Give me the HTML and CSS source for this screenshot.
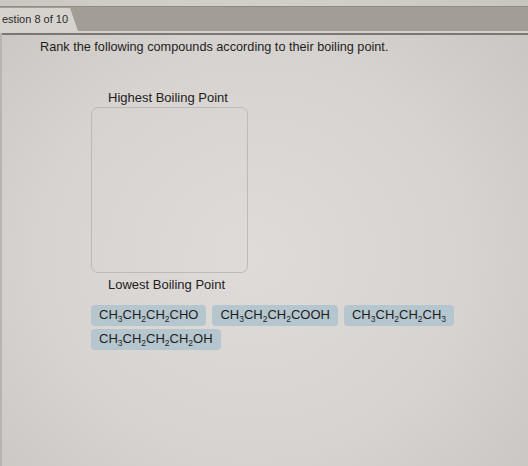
FILE: index.html
```html
<!DOCTYPE html>
<html lang="en">
<head>
    <meta charset="UTF-8">
    <meta name="viewport" content="width=device-width, initial-scale=1.0">
    <title>Question 8 of 10</title>
    <link rel="stylesheet" href="styles.css">
</head>
<body>
    <div class="tab-bar">
        <div class="tab">estion 8 of 10</div>
    </div>

    <div class="panel">
        <p class="prompt">Rank the following compounds according to their boiling point.</p>

        <div class="ranking">
            <div class="rank-label">Highest Boiling Point</div>
            <div class="drop-zone"></div>
            <div class="rank-label">Lowest Boiling Point</div>

            <div class="choices">
                <div class="chip">CH<sub>3</sub>CH<sub>2</sub>CH<sub>2</sub>CHO</div>
                <div class="chip">CH<sub>3</sub>CH<sub>2</sub>CH<sub>2</sub>COOH</div>
                <div class="chip">CH<sub>3</sub>CH<sub>2</sub>CH<sub>2</sub>CH<sub>3</sub></div>
                <div class="chip">CH<sub>3</sub>CH<sub>2</sub>CH<sub>2</sub>CH<sub>2</sub>OH</div>
            </div>
        </div>
    </div>
</body>
</html>
```

FILE: styles.css
```css
html, body {
    height: 100%;
}

body {
    margin: 0;
    font-family: "Liberation Sans", Arial, sans-serif;
    color: #1f1e1d;
    background: radial-gradient(ellipse at 48% 55%, #dedbd8 0%, #d6d3d0 55%, #c8c5c1 100%);
    display: flex;
    flex-direction: column;
}

/* Question tab strip */
.tab-bar {
    height: 24px;
    margin-top: 6px;
    background-color: #a29d95;
    border-top: 1px solid #8f8a82;
    border-bottom: 2px solid #d4d1cc;
    box-shadow: 0 2px 0 #7a7672;
    display: flex;
    align-items: flex-end;
}

.tab {
    height: 23px;
    line-height: 22px;
    width: 76px;
    padding-left: 2px;
    font-size: 11px;
    white-space: nowrap;
    color: #2b2a29;
    background-color: #d6d3ce;
    clip-path: polygon(0 0, 70px 0, 100% 100%, 0 100%);
}

.panel {
    flex: 1;
    padding: 6px 0 0 38px;
    border-left: 2px solid #b8b5b1;
}

.prompt {
    margin: 0;
    font-size: 12.7px;
    line-height: 16px;
}

.ranking {
    margin: 35px 0 0 51px;
}

.rank-label {
    padding-left: 17px;
    font-size: 13px;
    line-height: 16px;
}

.drop-zone {
    width: 155px;
    height: 164px;
    margin: 1px 0 4px;
    border: 1px solid #bebbb7;
    border-radius: 7px;
}

.choices {
    display: flex;
    flex-wrap: wrap;
    gap: 3px 6px;
    width: 400px;
    margin-top: 12px;
}

.chip {
    padding: 0 8px;
    height: 21px;
    line-height: 20px;
    font-size: 13px;
    color: #1e1e1e;
    background-color: #b6c6ce;
    border-radius: 4px;
}

.chip sub {
    font-size: 8.5px;
    vertical-align: -3px;
    line-height: 0;
}
```
